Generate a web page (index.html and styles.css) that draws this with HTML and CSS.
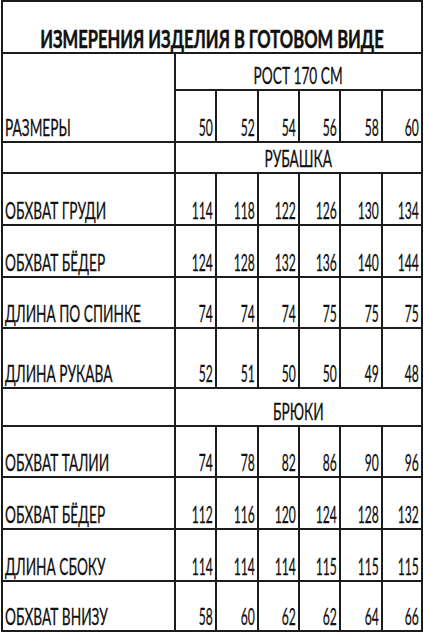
FILE: index.html
```html
<!DOCTYPE html>
<html lang="ru">
<head>
<meta charset="utf-8">
<title>Измерения изделия в готовом виде</title>
<link rel="stylesheet" href="styles.css">
</head>
<body>
<table class="sheet">
  <colgroup>
    <col class="c-label">
    <col class="c-41"><col class="c-42"><col class="c-41"><col class="c-41"><col class="c-42"><col class="c-40">
  </colgroup>
  <tr class="r-title">
    <td colspan="7" class="title"><span class="tt">ИЗМЕРЕНИЯ ИЗДЕЛИЯ В ГОТОВОМ ВИДЕ</span></td>
  </tr>
  <tr class="r-height">
    <td rowspan="2" class="label"><span class="tl">РАЗМЕРЫ</span></td>
    <td colspan="6" class="head"><span class="th">РОСТ 170 СМ</span></td>
  </tr>
  <tr class="r-sizes">
    <td class="num"><span class="tn">50</span></td>
    <td class="num"><span class="tn">52</span></td>
    <td class="num"><span class="tn">54</span></td>
    <td class="num"><span class="tn">56</span></td>
    <td class="num"><span class="tn">58</span></td>
    <td class="num"><span class="tn">60</span></td>
  </tr>
  <tr class="r-shirt">
    <td class="label"></td>
    <td colspan="6" class="head"><span class="th">РУБАШКА</span></td>
  </tr>
  <tr class="r-52">
    <td class="label"><span class="tl">ОБХВАТ ГРУДИ</span></td>
    <td class="num"><span class="tn">114</span></td>
    <td class="num"><span class="tn">118</span></td>
    <td class="num"><span class="tn">122</span></td>
    <td class="num"><span class="tn">126</span></td>
    <td class="num"><span class="tn">130</span></td>
    <td class="num"><span class="tn">134</span></td>
  </tr>
  <tr class="r-52">
    <td class="label"><span class="tl">ОБХВАТ БЁДЕР</span></td>
    <td class="num"><span class="tn">124</span></td>
    <td class="num"><span class="tn">128</span></td>
    <td class="num"><span class="tn">132</span></td>
    <td class="num"><span class="tn">136</span></td>
    <td class="num"><span class="tn">140</span></td>
    <td class="num"><span class="tn">144</span></td>
  </tr>
  <tr class="r-51">
    <td class="label"><span class="tl">ДЛИНА ПО СПИНКЕ</span></td>
    <td class="num"><span class="tn">74</span></td>
    <td class="num"><span class="tn">74</span></td>
    <td class="num"><span class="tn">74</span></td>
    <td class="num"><span class="tn">75</span></td>
    <td class="num"><span class="tn">75</span></td>
    <td class="num"><span class="tn">75</span></td>
  </tr>
  <tr class="r-61">
    <td class="label"><span class="tl">ДЛИНА РУКАВА</span></td>
    <td class="num"><span class="tn">52</span></td>
    <td class="num"><span class="tn">51</span></td>
    <td class="num"><span class="tn">50</span></td>
    <td class="num"><span class="tn">50</span></td>
    <td class="num"><span class="tn">49</span></td>
    <td class="num"><span class="tn">48</span></td>
  </tr>
  <tr class="r-pants">
    <td class="label"></td>
    <td colspan="6" class="head"><span class="th">БРЮКИ</span></td>
  </tr>
  <tr class="r-51">
    <td class="label"><span class="tl">ОБХВАТ ТАЛИИ</span></td>
    <td class="num"><span class="tn">74</span></td>
    <td class="num"><span class="tn">78</span></td>
    <td class="num"><span class="tn">82</span></td>
    <td class="num"><span class="tn">86</span></td>
    <td class="num"><span class="tn">90</span></td>
    <td class="num"><span class="tn">96</span></td>
  </tr>
  <tr class="r-52">
    <td class="label"><span class="tl">ОБХВАТ БЁДЕР</span></td>
    <td class="num"><span class="tn">112</span></td>
    <td class="num"><span class="tn">116</span></td>
    <td class="num"><span class="tn">120</span></td>
    <td class="num"><span class="tn">124</span></td>
    <td class="num"><span class="tn">128</span></td>
    <td class="num"><span class="tn">132</span></td>
  </tr>
  <tr class="r-52">
    <td class="label"><span class="tl">ДЛИНА СБОКУ</span></td>
    <td class="num"><span class="tn">114</span></td>
    <td class="num"><span class="tn">114</span></td>
    <td class="num"><span class="tn">114</span></td>
    <td class="num"><span class="tn">115</span></td>
    <td class="num"><span class="tn">115</span></td>
    <td class="num"><span class="tn">115</span></td>
  </tr>
  <tr class="r-50">
    <td class="label"><span class="tl">ОБХВАТ ВНИЗУ</span></td>
    <td class="num"><span class="tn">58</span></td>
    <td class="num"><span class="tn">60</span></td>
    <td class="num"><span class="tn">62</span></td>
    <td class="num"><span class="tn">62</span></td>
    <td class="num"><span class="tn">64</span></td>
    <td class="num"><span class="tn">66</span></td>
  </tr>
</table>
</body>
</html>
```
FILE: styles.css
```css
html, body {
  margin: 0;
  padding: 0;
  background: #ffffff;
}

body {
  font-family: "Lato", "Open Sans", "Liberation Sans", sans-serif;
  color: #111111;
  padding: 0 0 0 1px;
}

.sheet {
  border-collapse: collapse;
  table-layout: fixed;
  width: 420px;
  border: 2px solid #1c1c1c;
}

.c-label { width: 173px; }
.c-40 { width: 40px; }
.c-41 { width: 41px; }
.c-42 { width: 42px; }

.sheet td {
  border: 2px solid #1c1c1c;
  padding: 0 2px 4px 2px;
  vertical-align: bottom;
  font-size: 24px;
  line-height: 20px;
  white-space: nowrap;
  overflow: visible;
}

.r-title { height: 52px; }
.r-height { height: 37px; }
.r-sizes { height: 52px; }
.r-shirt { height: 31px; }
.r-52 { height: 52px; }
.r-51 { height: 51px; }
.r-61 { height: 60px; }
.r-pants { height: 38px; }
.r-50 { height: 50px; }

.sheet .title {
  text-align: center;
  font-weight: 700;
  font-size: 24px;
  padding-bottom: 3px;
}

.head {
  text-align: center;
}

.label {
  text-align: left;
}

.num {
  text-align: right;
}

.tt, .th, .tl, .tn {
  display: inline-block;
  -webkit-text-stroke: 0.3px #111111;
}

.tt {
  margin: 0 -120px;
  transform: scaleX(0.69);
  transform-origin: center bottom;
  -webkit-text-stroke: 0.5px #111111;
}

.th {
  margin: 0 -60px;
  transform: scaleX(0.57);
  transform-origin: center bottom;
}

.tl {
  margin-right: -80px;
  transform: scaleX(0.57);
  transform-origin: left bottom;
}

.tn {
  margin-left: -40px;
  transform: scaleX(0.505);
  transform-origin: right bottom;
}
```
